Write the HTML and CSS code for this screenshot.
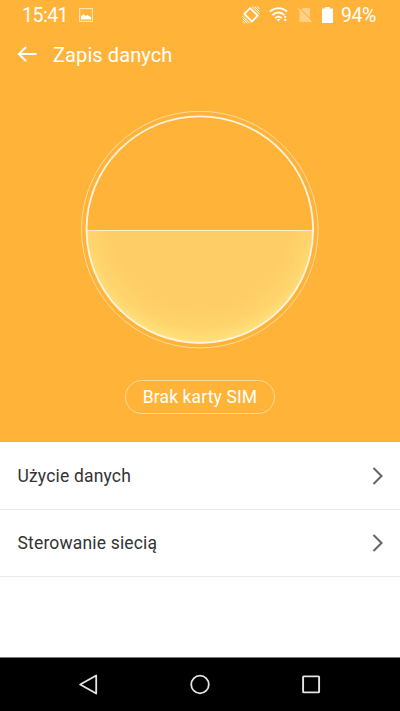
FILE: index.html
```html
<!DOCTYPE html>
<html lang="pl">
<head>
<meta charset="utf-8">
<title>Zapis danych</title>
<link rel="stylesheet" href="styles.css">
</head>
<body>
<main class="hero">
  <div class="status">
    <span class="time">15:41</span>
    <svg class="picture" width="14" height="14" viewBox="0 0 14 14"><rect x=".6" y=".6" width="12.8" height="12.8" fill="none" stroke="#ffe0ae" stroke-width="1.2"/><path d="M2 11.5V8.2L4.6 6l2.2 2 1.6-1L12 9.2v2.3z" fill="#fff"/></svg>
    <svg class="rotate" width="18" height="18" viewBox="0 0 18 18" fill="none" stroke="#fff"><path d="M8.1 2.1 15.7 9.7 9.9 15.5 2.3 7.9z" stroke-width="1.8" stroke-linejoin="round"/><path d="M10.2.6 17.4 7.8M12.6.6l4.8 4.8M15 .6 17.4 3M.6 10.2l7.2 7.2M.6 12.6l4.8 4.8M.6 15 3 17.4" stroke-width="1"/></svg>
    <svg class="wifi" width="20" height="15" viewBox="0 0 20 15" fill="none" stroke="#fff" stroke-width="1.7"><path d="M.8 4.7Q9.5-2.4 18.2 4.7M3.5 8Q9.5 3 15.5 8M6.2 11.1q3.3-2.8 6.6 0"/><path d="M7.6 12.3q1.9-1.3 3.8 0L9.5 14.5z" fill="#fff" stroke="none"/><path d="M16.2 9v2M16.2 12v2" stroke-width="2"/></svg>
    <svg class="sim" width="14" height="16" viewBox="0 0 14 16"><path d="M4.8 1H12v14H1.5V4.4z" fill="#ffcf83"/><path d="M1.3 1.1 14 14.3" stroke="#ffb339" stroke-width="1.4"/><path d="M.3 1.5 13.3 15" stroke="#ffd699" stroke-width="1.1"/></svg>
    <svg class="battery" width="11" height="16" viewBox="0 0 11 16"><path d="M3.2 0h4.6v1.5H11V16H0V1.5h3.2z" fill="#fff"/></svg>
    <span class="percent">94%</span>
  </div>
  <header class="header">
    <svg width="20" height="16" viewBox="0 0 20 16" fill="none" stroke="#fff" stroke-width="2.1"><path d="M19.5 8H1.9M9 .9 1.9 8 9 15.1"/></svg>
    <h1 class="title">Zapis danych</h1>
  </header>
  <svg class="gauge" width="240" height="240" viewBox="0 0 240 240">
    <defs>
      <radialGradient id="fill" gradientUnits="userSpaceOnUse" cx="120" cy="108" r="126">
        <stop offset="0" stop-color="#ffcd65"/><stop offset=".72" stop-color="#ffcd65"/><stop offset=".88" stop-color="#ffd46d"/><stop offset="1" stop-color="#ffe480"/>
      </radialGradient>
    </defs>
    <path d="M7 120.5a113 113 0 0 0 226 0z" fill="url(#fill)"/>
    <path d="M7 120.5h226" stroke="#fff0d4"/>
    <circle cx="119.8" cy="119.6" r="113.3" fill="none" stroke="#fff3df" stroke-width="1.8"/>
    <circle cx="119.8" cy="119.6" r="118.3" fill="none" stroke="#ffda9c" stroke-width="1"/>
  </svg>
  <div class="sim-label">Brak karty SIM</div>
</main>
<section class="list">
  <div class="row"><span>Użycie danych</span><svg width="12" height="18" viewBox="0 0 12 18"><path d="m1.5 1 8 8-8 8" fill="none" stroke="#666" stroke-width="2.1"/></svg></div>
  <div class="row"><span>Sterowanie siecią</span><svg width="12" height="18" viewBox="0 0 12 18"><path d="m1.5 1 8 8-8 8" fill="none" stroke="#666" stroke-width="2.1"/></svg></div>
</section>
<nav class="nav">
  <svg width="20" height="22" viewBox="0 0 20 22"><path d="M17.2 1.5v18L1.2 10.5z" fill="none" stroke="#e4e4e2" stroke-width="1.8" stroke-linejoin="round"/></svg>
  <svg width="20" height="22" viewBox="0 0 20 22"><circle cx="10" cy="10.5" r="8.8" fill="none" stroke="#e4e4e2" stroke-width="1.8"/></svg>
  <svg width="20" height="22" viewBox="0 0 20 22"><rect x="2.1" y="2.4" width="16" height="16" rx=".6" fill="none" stroke="#e4e4e2" stroke-width="1.9"/></svg>
</nav>
</body>
</html>
```
FILE: styles.css
```css
* { box-sizing: border-box; }
body {
  margin: 0;
  height: 711px;
  display: flex;
  flex-direction: column;
  overflow: hidden;
  background: #fff;
  font-family: Roboto, "Noto Sans", sans-serif;
}
svg { display: block; flex: none; }
.hero {
  height: 442px;
  flex: none;
  display: flex;
  flex-direction: column;
  align-items: center;
  background: #ffb339;
  color: #fff;
}
.status {
  width: 100%;
  height: 29px;
  padding-left: 22px;
  display: flex;
  align-items: center;
  font-size: 19.5px;
  line-height: 29px;
  letter-spacing: -.5px;
}
.status span { padding-top: 1px; }
.time { width: 57px; }
.percent { margin-left: 8px; }
.rotate { margin-left: 149px; }
.wifi { margin-left: 9px; }
.sim { margin-left: 9px; }
.battery { margin-left: 10px; }
.header {
  width: 100%;
  height: 50px;
  padding-left: 17px;
  display: flex;
  align-items: center;
  gap: 16px;
}
.title {
  margin: 0;
  padding-top: 2px;
  font-size: 20px;
  font-weight: 400;
  line-height: 48px;
  letter-spacing: .1px;
}
.gauge { margin-top: 31px; }
.sim-label {
  width: 150px;
  height: 34px;
  margin-top: 30px;
  border: 1px solid #ffd99e;
  border-radius: 17px;
  font-size: 17.5px;
  line-height: 33px;
  letter-spacing: .12px;
  text-align: center;
  white-space: nowrap;
}
.list { flex: 1; }
.row {
  height: 67px;
  padding: 0 16px 0 17.5px;
  display: flex;
  align-items: center;
  justify-content: space-between;
  border-bottom: 1px solid #ebebeb;
  color: #333;
  font-size: 17.5px;
  letter-spacing: .17px;
}
.row:first-child { height: 68px; }
.row:first-child span { padding-top: 1px; }
.nav {
  height: 54px;
  padding: 0 79px;
  display: flex;
  align-items: center;
  justify-content: space-between;
  border-top: 1px solid #777;
  background: #000;
}
```
